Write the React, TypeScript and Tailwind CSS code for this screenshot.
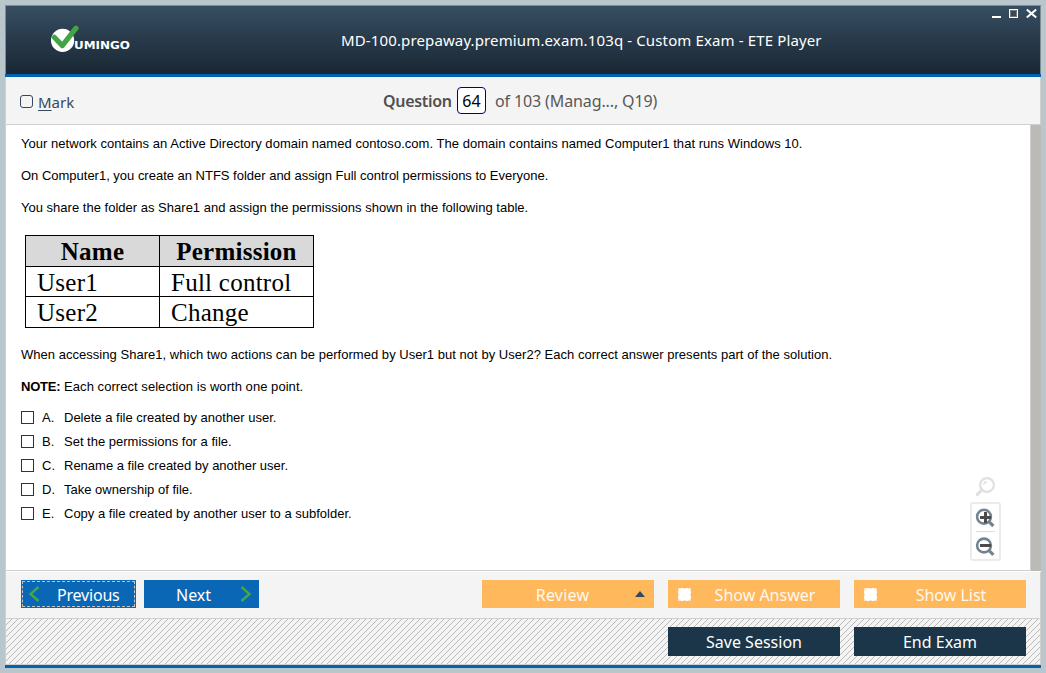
import React from "react";

const ui = "font-['Noto_Sans',sans-serif]";

const paragraph = "whitespace-nowrap text-[13px] leading-[16px]";

const answers = [
  { letter: "A.", text: "Delete a file created by another user." },
  { letter: "B.", text: "Set the permissions for a file." },
  { letter: "C.", text: "Rename a file created by another user." },
  { letter: "D.", text: "Take ownership of file." },
  { letter: "E.", text: "Copy a file created by another user to a subfolder." },
];

function Logo() {
  return (
    <svg width="86" height="34" viewBox="0 0 86 34" className="block">
      <circle cx="14.6" cy="18.4" r="11.6" fill="#fff" />
      <path d="M6.3 15.3 L14.3 23.6 L28 6.2" fill="none" stroke="#43a447" strokeWidth="5.2" strokeLinecap="round" strokeLinejoin="round" />
      <text x="26" y="27" textLength="56" lengthAdjust="spacingAndGlyphs" fontSize="9.8" fontWeight="700" fill="#fff" fontFamily="DejaVu Sans, sans-serif">UMINGO</text>
    </svg>
  );
}

function WindowControls() {
  return (
    <svg width="48" height="14" viewBox="0 0 48 14" className="block" shapeRendering="crispEdges">
      <rect x="0" y="8" width="9" height="2" fill="#fff" />
      <rect x="17.5" y="1.5" width="8" height="8" fill="none" stroke="#fff" />
      <rect x="18.5" y="2.5" width="6" height="6" fill="none" stroke="#777" />
      <path d="M34.8 1.5 L44.2 9.5 M44.2 1.5 L34.8 9.5" stroke="#fff" strokeWidth="2.1" shapeRendering="auto" />
    </svg>
  );
}

function ZoomTools() {
  return (
    <div className="absolute top-[351px] left-[964px] w-[31px]">
      <svg width="31" height="24" viewBox="0 0 31 24" className="block">
        <circle cx="17" cy="9" r="6.9" fill="none" stroke="#e0e0e0" strokeWidth="2.2" />
        <path d="M13.8 8.8 a3.2 3.2 0 0 1 3-3" fill="none" stroke="#e0e0e0" strokeWidth="1.5" />
        <path d="M12 14 L7.2 18.6" stroke="#e0e0e0" strokeWidth="3.2" strokeLinecap="round" />
      </svg>
      <div className="mt-[2px] h-[59px] rounded-[3px] border-2 border-[#ebebeb] bg-white">
        <svg width="27" height="55" viewBox="0 0 27 55" className="block">
          <g fill="none" stroke="#738490">
            <circle cx="12" cy="12.7" r="6.9" strokeWidth="2.6" />
            <path d="M16.6 17.3 L21.4 22" strokeWidth="3.2" />
            <circle cx="12" cy="41.5" r="6.9" strokeWidth="2.6" />
            <path d="M16.6 46.1 L21.4 50.8" strokeWidth="3.2" />
          </g>
          <path d="M8 13.5 h11 M13.5 8 v11" stroke="#4b4b4b" strokeWidth="3" />
          <path d="M8 41.5 h11" stroke="#4b4b4b" strokeWidth="3" />
          <path d="M4 27.5 h19" stroke="#dcdcdc" />
        </svg>
      </div>
    </div>
  );
}

function OrangeButton({ label, check }: { label: string; check?: boolean }) {
  return (
    <button className={`relative flex h-7 w-[172px] items-center justify-center bg-[#ffb85c] pt-[2px] text-[16px] text-[#fff9ef] ${ui}`}>
      {check && (
        <span className="absolute top-2 left-[10px] h-[13px] w-[13px] border border-dashed border-[#ffe2bb] bg-white" />
      )}
      <span className={check ? "ml-[22px]" : "mr-[11px] tracking-[0.2px]"}>{label}</span>
      {!check && (
        <svg width="10" height="6" viewBox="0 0 10 6" className="absolute top-[11px] right-[9px]">
          <path d="M0 6 L5 0 L10 6Z" fill="#34495e" />
        </svg>
      )}
    </button>
  );
}

function Chevron({ flip }: { flip?: boolean }) {
  return (
    <svg width="11" height="16" viewBox="0 0 11 16" className={flip ? "rotate-180" : ""}>
      <path d="M9.5 1 L1.5 8 L9.5 15" fill="none" stroke="#43a84c" strokeWidth="2.4" />
    </svg>
  );
}

export default function App() {
  return (
    <div className="h-[673px] w-[1046px] overflow-hidden bg-[#b9c6cc] p-[5px]">
      <div className="flex h-[663px] w-[1036px] flex-col">
        <header className="relative h-[69px] border-x border-t border-[#7d8d93] bg-linear-to-b from-[#374e62] to-[#192733]">
          <div className="pt-4 pl-[42px]"><Logo /></div>
          <div className="absolute top-[2px] right-0"><WindowControls /></div>
          <h1 className={`absolute top-[23px] left-[335px] text-[15px] leading-[22px] font-normal tracking-[0.13px] whitespace-nowrap text-white ${ui}`}>
            MD-100.prepaway.premium.exam.103q - Custom Exam - ETE Player
          </h1>
        </header>
        <div className="h-[3px] bg-[#0064b4]" />

        <div className={`flex h-12 items-center border-x border-b border-[#cfcfcf] bg-[#f4f4f4] text-[16px] text-[#585858] ${ui}`}>
          <span className="mt-[2px] ml-[14px] h-[13px] w-[13px] rounded-[3px] border border-[#34495e]" />
          <span className="mt-[4px] ml-[5px] w-[345px] text-[15px] text-[#34495e]"><u className="underline-offset-2">M</u>ark</span>
          <span className="w-[74px] font-semibold tracking-[-0.3px] text-[#505050]">Question</span>
          <span className="flex h-[27px] w-[29px] items-center justify-center rounded-[4px] border border-[#00008b] bg-white text-black">64</span>
          <span className="ml-[9px] tracking-[-0.12px] whitespace-nowrap">of 103 (Manag..., Q19)</span>
        </div>

        <main className="relative flex h-[446px] border-l border-[#cfcfcf] bg-white text-black">
          <div className="w-[1025px] border-r border-[#cfcfcf] pt-[11px] pl-[15px] font-['Liberation_Sans',sans-serif]">
            <p className={`tracking-[0.032px] ${paragraph}`}>Your network contains an Active Directory domain named contoso.com. The domain contains named Computer1 that runs Windows 10.</p>
            <p className={`mt-4 tracking-[-0.01px] ${paragraph}`}>On Computer1, you create an NTFS folder and assign Full control permissions to Everyone.</p>
            <p className={`mt-4 tracking-[0.012px] ${paragraph}`}>You share the folder as Share1 and assign the permissions shown in the following table.</p>
            <table className="mt-[19px] ml-1 w-[289px] table-fixed border-collapse font-['Liberation_Serif',serif] text-[25px] leading-[29px] tracking-[0.25px]">
              <colgroup><col className="w-[134px]" /><col className="w-[154px]" /></colgroup>
              <tbody>
                <tr className="h-[31px] bg-[#d9d9d9]">
                  <th className="border border-black">Name</th>
                  <th className="border border-black">Permission</th>
                </tr>
                <tr className="h-[30px] leading-[27px]">
                  <td className="border border-black pt-[2px] pl-[11px]">User1</td>
                  <td className="border border-black pt-[2px] pl-[11px]">Full control</td>
                </tr>
                <tr className="h-[31px]">
                  <td className="border border-black pl-[11px]">User2</td>
                  <td className="border border-black pl-[11px]">Change</td>
                </tr>
              </tbody>
            </table>
            <p className={`mt-[19px] tracking-[0.03px] ${paragraph}`}>When accessing Share1, which two actions can be performed by User1 but not by User2? Each correct answer presents part of the solution.</p>
            <p className={`mt-4 tracking-[0.05px] ${paragraph}`}><b className="tracking-[-0.2px]">NOTE:</b> Each correct selection is worth one point.</p>
            <div className="mt-[11px]">
              {answers.map((a) => (
                <label key={a.letter} className="flex h-6 items-center text-[13px]">
                  <span className="-mt-[2px] h-[13px] w-[13px] border border-[#333]" />
                  <span className="ml-2 w-[22px]">{a.letter}</span>
                  <span className="whitespace-nowrap">{a.text}</span>
                </label>
              ))}
            </div>
          </div>
          <div className="absolute bottom-0 left-0 h-px w-[1025px] bg-[#cfcfcf]" />
          <div className="grow bg-[#bbbab6]" />
          <ZoomTools />
        </main>

        <div className="h-px border-l border-[#cfcfcf] bg-white" />
        <div className="flex h-[46px] items-start border-x border-[#cfcfcf] bg-[#f4f4f4] pt-[8px] pl-[15px]">
          <button className={`relative flex h-7 w-[115px] items-center bg-[#0a67b5] pl-2 text-[16px] text-white ${ui}`}>
            <span className="absolute inset-px border border-dashed border-[#c9c4bb]" />
            <Chevron />
            <span className="mt-[2px] ml-[17px] tracking-[-0.2px]">Previous</span>
          </button>
          <button className={`ml-2 flex h-7 w-[115px] items-center bg-[#0a67b5] pl-8 text-[16px] text-white ${ui}`}>
            <span className="mt-[2px] w-[64px] text-left">Next</span>
            <Chevron flip />
          </button>
          <div className="ml-[223px] flex gap-[14px]">
            <OrangeButton label="Review" />
            <OrangeButton label="Show Answer" check />
            <OrangeButton label="Show List" check />
          </div>
        </div>

        <div className="relative h-[47px] border-x border-y border-[#cfcfcf]">
          <svg width="1034" height="45" className="absolute inset-0" shapeRendering="crispEdges">
            <defs>
              <pattern id="hatch" width="6" height="6" patternUnits="userSpaceOnUse">
                <rect width="6" height="6" fill="#f4f4f4" />
                {[0, 1, 2, 3, 4, 5].map((i) => (
                  <rect key={i} x={5 - i} y={i} width="1" height="1" fill="#b9b9b9" />
                ))}
              </pattern>
            </defs>
            <rect width="1034" height="45" fill="url(#hatch)" />
          </svg>
          <div className={`relative ml-[662px] flex gap-[14px] pt-2 text-[16px] text-white ${ui}`}>
            <button className="h-[29px] w-[172px] bg-[#1b3549]">Save Session</button>
            <button className="h-[29px] w-[172px] bg-[#1b3549]">End Exam</button>
          </div>
        </div>
        <div className="h-[3px] bg-[#0064b4]" />
      </div>
    </div>
  );
}
